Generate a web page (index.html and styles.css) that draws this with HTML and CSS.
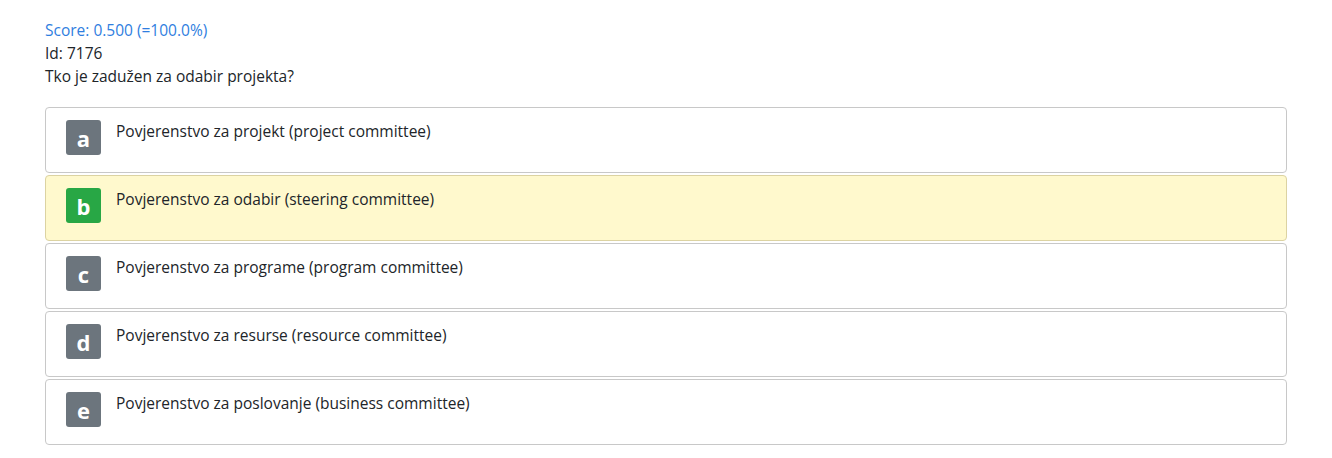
FILE: index.html
```html
<!DOCTYPE html>
<html>
<head>
<meta charset="utf-8">
<link rel="stylesheet" href="styles.css">
</head>
<body>
<div class="page">
  <div class="score">Score: 0.500 (=100.0%)</div>
  <div class="line">Id: 7176</div>
  <div class="line">Tko je zadužen za odabir projekta?</div>
  <div class="answers">
    <div class="answer"><span class="badge">a</span><span class="text">Povjerenstvo za projekt (project committee)</span></div>
    <div class="answer selected"><span class="badge correct">b</span><span class="text">Povjerenstvo za odabir (steering committee)</span></div>
    <div class="answer"><span class="badge">c</span><span class="text">Povjerenstvo za programe (program committee)</span></div>
    <div class="answer"><span class="badge">d</span><span class="text">Povjerenstvo za resurse (resource committee)</span></div>
    <div class="answer"><span class="badge">e</span><span class="text">Povjerenstvo za poslovanje (business committee)</span></div>
  </div>
</div>
</body>
</html>
```
FILE: styles.css
```css
html, body {
  margin: 0;
  padding: 0;
  background: #fff;
}
body {
  font-family: "Open Sans", "Noto Sans", sans-serif;
  font-size: 15.5px;
  color: #212529;
}
.page {
  padding: 18px 45px 0 45px;
}
.score {
  color: #2f7ee0;
  line-height: 24px;
}
.line {
  line-height: 23px;
}
.answers {
  margin-top: 19px;
  display: flex;
  flex-direction: column;
  gap: 2px;
}
.answer {
  height: 64px;
  border: 1px solid #c8c8c8;
  border-radius: 4px;
  display: flex;
  align-items: flex-start;
  padding: 0 0 0 20px;
  background: #fff;
}
.answer.selected {
  background: #fff9cd;
  border-color: #dcd3a2;
}
.badge {
  width: 35px;
  height: 35px;
  margin-top: 12px;
  border-radius: 3px;
  background: #6c757d;
  color: #fff;
  font-weight: 700;
  font-size: 22px;
  display: flex;
  align-items: center;
  justify-content: center;
  line-height: 1;
}
.badge.correct {
  background: #28a745;
}
.text {
  margin-left: 15px;
  margin-top: 11px;
  line-height: 24px;
}
```
